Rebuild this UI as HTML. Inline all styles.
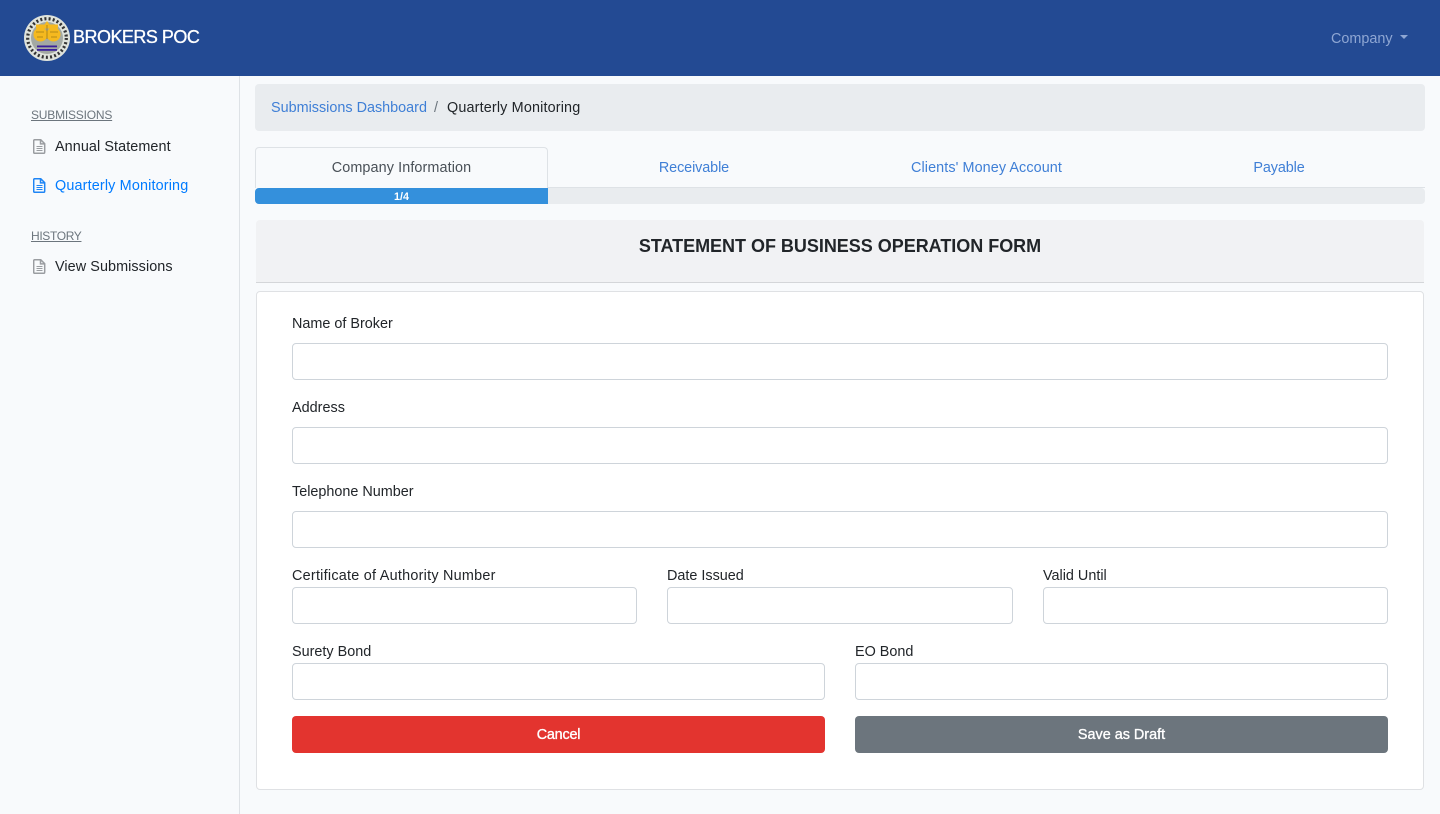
<!DOCTYPE html>
<html><head><meta charset="utf-8"><title>Brokers POC</title>
<style>
*{box-sizing:border-box}
html,body{margin:0;padding:0;width:1440px;height:814px;overflow:hidden;background:#f8fafc;font-family:"Liberation Sans",Arial,sans-serif;font-size:14.4px;color:#212529}
.a{position:absolute;white-space:nowrap;line-height:20px}
.box{position:absolute}
.inp{position:absolute;background:#fff;border:1px solid #ced4da;border-radius:4px;height:37px}
.lbl{position:absolute;white-space:nowrap;line-height:20px;color:#212529}
.c{text-align:center}
.blue{color:#3f7fd6}
</style></head><body>
<div class="box" style="left:0;top:0;width:1440px;height:76px;background:#234a93"></div>
<svg class="box" style="left:24px;top:15px" width="46" height="46" viewBox="0 0 46 46">
<circle cx="23" cy="23" r="23" fill="#dfe3dc"/>
<circle cx="23" cy="23" r="19.300" fill="none" stroke="#333" stroke-width="3.200" stroke-dasharray="2 2.200"/>
<circle cx="23" cy="23" r="16" fill="#a3a9a3"/>
<path d="M23 6l2.500 3.500H34v4H12v-4h8.500z" fill="#f5b91f"/>
<circle cx="16.500" cy="19.500" r="7" fill="#f5b91f"/>
<circle cx="29.500" cy="19.500" r="7" fill="#f5b91f"/>
<path d="M12 17h8M26 17h8M23 10v14M13 22h6M27 22h6" stroke="#a07c14" stroke-width=".8"/>
<rect x="13" y="30.500" width="20" height="1.800" fill="#3a1f9a"/><rect x="13" y="34" width="20" height="1.800" fill="#3a1f9a"/>
</svg>
<div class="a" style="left:73px;top:26px;color:#fff;font-size:18px;line-height:22px;letter-spacing:-.52px;-webkit-text-stroke:.3px #fff">BROKERS POC</div>
<div class="a" style="left:1331px;top:29px;color:#8ea6d3;font-size:14.4px;letter-spacing:0">Company</div>
<div class="box" style="left:1400px;top:35px;width:0;height:0;border-left:4px solid transparent;border-right:4px solid transparent;border-top:4px solid #8ea6d3"></div>

<div class="box" style="left:239px;top:76px;width:1px;height:738px;background:#dee2e6"></div>
<div class="a" style="left:31px;top:105px;color:#6c757d;font-size:12px;text-decoration:underline;letter-spacing:-.2px">SUBMISSIONS</div>
<div class="a" style="left:31px;top:226px;color:#6c757d;font-size:12px;text-decoration:underline;letter-spacing:-.35px">HISTORY</div>
<svg class="box" style="left:33px;top:139px" width="13" height="15" viewBox="0 0 13 15" fill="none" stroke="#9a9da1" stroke-width="1.500"><path d="M1.700.7h6l4 4v8.600a1 1 0 0 1-1 1h-9a1 1 0 0 1-1-1v-11.600a1 1 0 0 1 1-1zM7.500.9v4h4"/><path d="M3.500 7.500h6M3.500 9.500h6M3.500 11.500h6" stroke-width="1"/></svg>
<svg class="box" style="left:33px;top:178px" width="13" height="15" viewBox="0 0 13 15" fill="none" stroke="#1f85f5" stroke-width="1.500"><path d="M1.700.7h6l4 4v8.600a1 1 0 0 1-1 1h-9a1 1 0 0 1-1-1v-11.600a1 1 0 0 1 1-1zM7.500.9v4h4"/><path d="M3.500 7.500h6M3.500 9.500h6M3.500 11.500h6" stroke-width="1"/></svg>
<svg class="box" style="left:33px;top:259px" width="13" height="15" viewBox="0 0 13 15" fill="none" stroke="#9a9da1" stroke-width="1.500"><path d="M1.700.7h6l4 4v8.600a1 1 0 0 1-1 1h-9a1 1 0 0 1-1-1v-11.600a1 1 0 0 1 1-1zM7.500.9v4h4"/><path d="M3.500 7.500h6M3.500 9.500h6M3.500 11.500h6" stroke-width="1"/></svg>
<div class="a" style="left:55px;top:137px;letter-spacing:.08px">Annual Statement</div>
<div class="a" style="left:55px;top:176px;color:#007bff;letter-spacing:.15px">Quarterly Monitoring</div>
<div class="a" style="left:55px;top:257px;letter-spacing:.07px">View Submissions</div>

<div class="box" style="left:255px;top:84px;width:1170px;height:47px;background:#e9ecef;border-radius:4px"></div>
<div class="a blue" style="left:271px;top:98px;letter-spacing:0">Submissions Dashboard</div>
<div class="a" style="left:434px;top:98px;color:#6c757d">/</div>
<div class="a" style="left:447px;top:98px;letter-spacing:.15px">Quarterly Monitoring</div>

<div class="box" style="left:255px;top:187px;width:1170px;height:1px;background:#dee2e6"></div>
<div class="box" style="left:255px;top:147px;width:293px;height:41px;background:#f8fafc;border:1px solid #dee2e6;border-bottom:none;border-radius:4px 4px 0 0"></div>
<div class="a c" style="left:255px;top:158px;width:293px;color:#495057;letter-spacing:.1px">Company Information</div>
<div class="a c blue" style="left:548px;top:158px;width:292px;letter-spacing:-.1px">Receivable</div>
<div class="a c blue" style="left:840px;top:158px;width:293px;letter-spacing:.08px">Clients' Money Account</div>
<div class="a c blue" style="left:1133px;top:158px;width:292px;letter-spacing:-.1px">Payable</div>
<div class="box" style="left:255px;top:188px;width:1170px;height:16px;background:#e9ecef;border-radius:4px;overflow:hidden"><div style="width:293px;height:16px;background:#3490dc;color:#fff;font-size:10.800px;font-weight:bold;text-align:center;line-height:18px">1/4</div></div>

<div class="box" style="left:256px;top:220px;width:1168px;height:63px;background:#f1f2f4;border-bottom:1px solid #d4d6d9;border-radius:4px 4px 0 0"></div>
<div class="a c" style="left:256px;top:235px;width:1168px;font-size:18px;font-weight:bold;line-height:22px;letter-spacing:-.02px">STATEMENT OF BUSINESS OPERATION FORM</div>
<div class="box" style="left:256px;top:291px;width:1168px;height:499px;background:#fff;border:1px solid #dfe1e4;border-radius:4px"></div>

<div class="lbl" style="left:292px;top:314px">Name of Broker</div>
<div class="inp" style="left:292px;top:343px;width:1096px"></div>
<div class="lbl" style="left:292px;top:398px;letter-spacing:.02px">Address</div>
<div class="inp" style="left:292px;top:427px;width:1096px"></div>
<div class="lbl" style="left:292px;top:482px">Telephone Number</div>
<div class="inp" style="left:292px;top:511px;width:1096px"></div>
<div class="lbl" style="left:292px;top:566px;letter-spacing:.25px">Certificate of Authority Number</div>
<div class="inp" style="left:292px;top:587px;width:345px"></div>
<div class="lbl" style="left:667px;top:566px">Date Issued</div>
<div class="inp" style="left:667px;top:587px;width:346px"></div>
<div class="lbl" style="left:1043px;top:566px">Valid Until</div>
<div class="inp" style="left:1043px;top:587px;width:345px"></div>
<div class="lbl" style="left:292px;top:642px">Surety Bond</div>
<div class="inp" style="left:292px;top:663px;width:533px"></div>
<div class="lbl" style="left:855px;top:642px">EO Bond</div>
<div class="inp" style="left:855px;top:663px;width:533px"></div>
<div class="box c" style="left:292px;top:716px;width:533px;height:37px;background:#e3342f;border-radius:4px;color:#fff;line-height:36px;padding-top:1px;letter-spacing:-.2px;-webkit-text-stroke:.35px #fff">Cancel</div>
<div class="box c" style="left:855px;top:716px;width:533px;height:37px;background:#6c757d;border-radius:4px;color:#fff;line-height:36px;padding-top:1px;-webkit-text-stroke:.35px #fff">Save as Draft</div>
</body></html>
